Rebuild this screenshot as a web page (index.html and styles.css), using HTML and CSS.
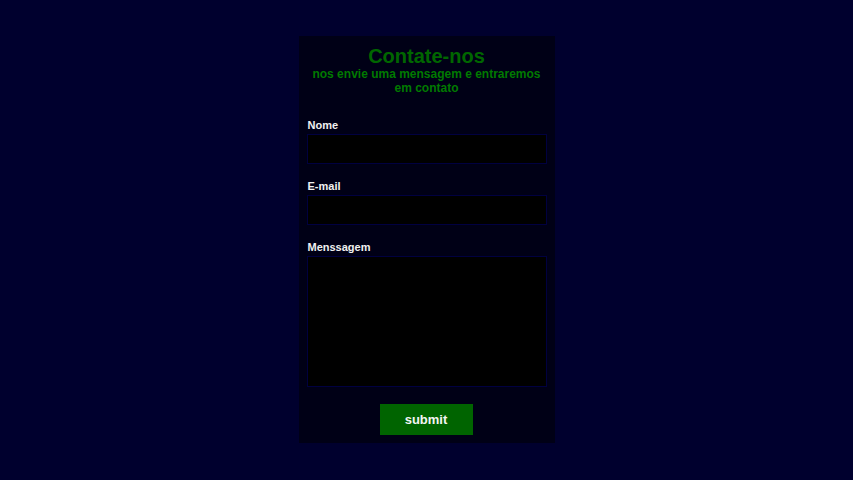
FILE: index.html
```html
<!DOCTYPE html>
<html lang="pt">
<head>
<meta charset="utf-8">
<title>Contate-nos</title>
<link rel="stylesheet" href="styles.css">
</head>
<body>
<main class="page">
  <form class="card">
    <h1 class="title">Contate-nos</h1>
    <p class="subtitle">nos envie uma mensagem e entraremos em contato</p>
    <label class="field">
      <span class="label">Nome</span>
      <input class="input" type="text">
    </label>
    <label class="field">
      <span class="label">E-mail</span>
      <input class="input" type="email">
    </label>
    <label class="field">
      <span class="label">Menssagem</span>
      <textarea class="input textarea"></textarea>
    </label>
    <div class="actions">
      <button class="submit" type="button">submit</button>
    </div>
  </form>
</main>
</body>
</html>
```

FILE: styles.css
```css
html, body {
  margin: 0;
  padding: 0;
  height: 100%;
}
body {
  background: #00002e;
  font-family: "Liberation Sans", Arial, sans-serif;
}
.page {
  display: flex;
  justify-content: center;
  padding-top: 36px;
}
.card {
  width: 256px;
  box-sizing: border-box;
  background: #000016;
  padding: 9px 8px 8px 8px;
  display: flex;
  flex-direction: column;
}
.title {
  margin: 0;
  font-size: 20px;
  line-height: 22px;
  font-weight: bold;
  color: #006600;
  text-align: center;
}
.subtitle {
  margin: 0 0 24px;
  font-size: 12px;
  line-height: 14px;
  font-weight: bold;
  color: #007a00;
  text-align: center;
}
.field {
  display: flex;
  flex-direction: column;
  margin-bottom: 16px;
}
.label {
  font-size: 11px;
  line-height: 13px;
  font-weight: bold;
  color: #f0f0f0;
  margin-bottom: 2px;
  padding-left: 1px;
}
.input {
  box-sizing: border-box;
  width: 100%;
  height: 30px;
  margin: 0;
  background: #000000;
  border: 1px solid #000040;
  color: #fff;
  padding: 4px;
  font-family: inherit;
}
.textarea {
  height: 131px;
  resize: none;
}
.field:nth-of-type(3) {
  margin-bottom: 17px;
}
.actions {
  display: flex;
  justify-content: center;
}
.submit {
  width: 93px;
  height: 31px;
  margin-right: 1px;
  background: #006400;
  border: none;
  color: #f4f4f4;
  font-family: inherit;
  font-size: 13px;
  font-weight: bold;
  padding: 0;
}
```
